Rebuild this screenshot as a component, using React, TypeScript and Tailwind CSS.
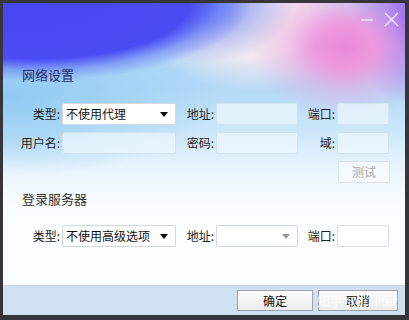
import React from 'react'

const font = "font-['Microsoft_YaHei','Noto_Sans_CJK_SC',sans-serif]"

function Caret({ grey }: { grey?: boolean }) {
  return (
    <svg width="8" height="5" viewBox="0 0 8 5" className="shrink-0">
      <path d="M0 0 L8 0 L4 5 Z" fill={grey ? '#9a9a9a' : '#111'} />
    </svg>
  )
}

function Label({ w, children }: { w: string; children: React.ReactNode }) {
  return <div className={`${w} shrink-0 text-right text-[12px] leading-none text-[#222] pr-[2px]`}>{children}</div>
}

function Field({ w, white }: { w: string; white?: boolean }) {
  return (
    <div
      className={`${w} h-[22px] shrink-0 rounded-[2px] border ${
        white ? 'border-[#d6dde4] bg-white' : 'border-[#cde3f1] bg-[#eef8fd]/70'
      }`}
    />
  )
}

function Select({ w, text, grey }: { w: string; text?: string; grey?: boolean }) {
  return (
    <div className={`${w} h-[22px] shrink-0 rounded-[2px] border border-[#d0d8e0] bg-white flex items-center justify-between pl-[3px] pr-[7px]`}>
      <span className="text-[12px] leading-none text-[#111]">{text}</span>
      <Caret grey={grey} />
    </div>
  )
}

export default function App() {
  return (
    <div className={`w-[409px] h-[320px] bg-[#35353a] pt-[3px] pl-[3px] overflow-hidden ${font}`}>
      <div className="relative w-[402px] h-[312px] flex flex-col overflow-hidden bg-[radial-gradient(ellipse_215px_78px_at_8%_0%,#4747f3_0%,#4a4cf3_72%,rgba(100,120,245,0.55)_86%,rgba(130,160,245,0)_100%),radial-gradient(ellipse_90px_60px_at_50%_0%,#6079f6_0%,rgba(120,145,246,0.5)_55%,rgba(150,170,246,0)_100%),radial-gradient(ellipse_95px_72px_at_85%_14%,#ea8ad8_0%,#ee98de_30%,rgba(238,160,224,0.45)_60%,rgba(238,160,224,0)_100%),radial-gradient(ellipse_55px_85px_at_100%_5%,#8862f0_0%,rgba(136,98,240,0.5)_55%,rgba(136,98,240,0)_100%),radial-gradient(ellipse_110px_70px_at_63%_6%,#f4ebec_0%,#f0e8f0_50%,rgba(240,232,240,0)_100%),radial-gradient(ellipse_220px_80px_at_0%_30%,#90caf3_0%,rgba(150,205,244,0.6)_50%,rgba(156,208,244,0)_100%),linear-gradient(180deg,#b0d6f6_0%,#b4daf6_28%,#d2eafa_44%,#eef7fd_56%,#fafdff_66%,#fcfeff_100%)]">
        {/* title controls */}
        <div className="h-[62px] shrink-0 flex justify-end items-start pt-[9px] pr-[6px] gap-[10px]">
          <svg width="13" height="14" viewBox="0 0 13 14" className="mt-[1px]">
            <path d="M0 7 H12" stroke="#f6f0ff" strokeWidth="1.2" />
          </svg>
          <svg width="15" height="15" viewBox="0 0 15 15">
            <path d="M1 1 L14 14 M14 1 L1 14" stroke="#f6f0ff" strokeWidth="1.2" />
          </svg>
        </div>

        <div className="pl-[19px] h-[18px] flex items-center text-[13px] leading-none text-[#1f2c6a]">网络设置</div>

        <div className="mt-[20px] flex items-center">
          <Label w="w-[59px]">类型:</Label>
          <Select w="w-[114px]" text="不使用代理" />
          <Label w="w-[40px]">地址:</Label>
          <Field w="w-[82px]" />
          <Label w="w-[39px]">端口:</Label>
          <Field w="w-[52px]" />
        </div>

        <div className="mt-[7px] flex items-center">
          <Label w="w-[59px]">用户名:</Label>
          <Field w="w-[114px]" />
          <Label w="w-[40px]">密码:</Label>
          <Field w="w-[82px]" />
          <Label w="w-[39px]">域:</Label>
          <Field w="w-[52px]" />
        </div>

        <div className="mt-[7px] flex">
          <div className="ml-[335px] w-[52px] h-[22px] border border-[#dde3e8] bg-white/50 flex items-center justify-center text-[12px] leading-none text-[#a8a8a8]">
            测试
          </div>
        </div>

        <div className="mt-[6px] pl-[19px] h-[18px] flex items-center text-[13px] leading-none text-[#333]">登录服务器</div>

        <div className="mt-[18px] flex items-center">
          <Label w="w-[59px]">类型:</Label>
          <Select w="w-[114px]" text="不使用高级选项" />
          <Label w="w-[40px]">地址:</Label>
          <Select w="w-[82px]" grey />
          <Label w="w-[39px]">端口:</Label>
          <Field w="w-[52px]" white />
        </div>

        <div className="flex-1" />

        {/* footer */}
        <div className="relative h-[30px] shrink-0 bg-[#cfe1f0] border-t border-[#c4d8ea] flex items-center justify-end pr-[7px] gap-[5px]">
          <div className="w-[76px] h-[21px] border border-[#9aa4ae] bg-[linear-gradient(180deg,#fbfbfb,#ececec)] flex items-center justify-center text-[12px] leading-none text-[#111]">
            确定
          </div>
          <div className="relative w-[80px] h-[21px] border border-[#9aa4ae] bg-[linear-gradient(180deg,#fbfbfb,#ececec)] flex items-center justify-center text-[12px] leading-none text-[#111]">
            取消
          </div>
          <div className="absolute right-[8px] top-[8px] text-[13px] leading-none text-white/70 tracking-tight pointer-events-none">
            知乎 @Julliter
          </div>
        </div>
      </div>
    </div>
  )
}
